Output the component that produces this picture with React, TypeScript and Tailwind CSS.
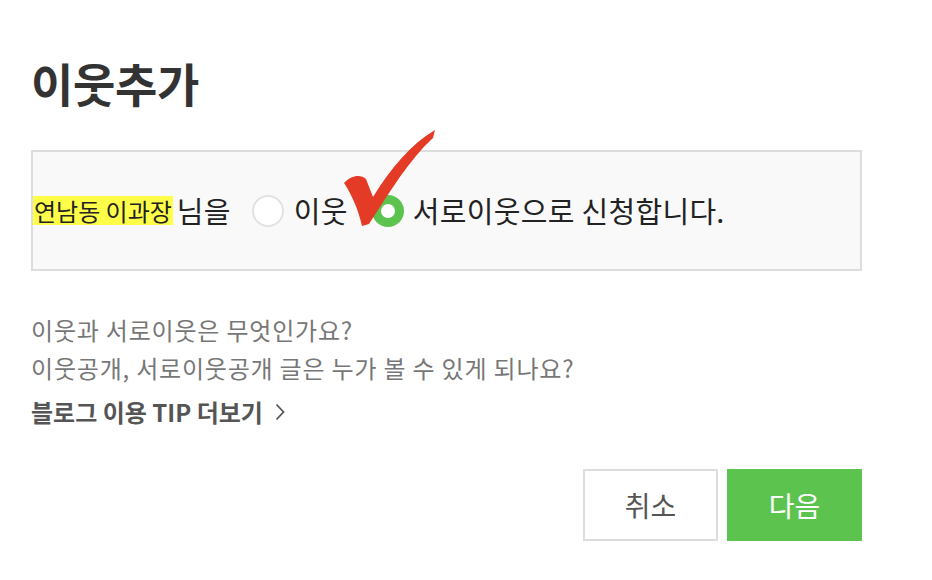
import React from 'react';

const FONT = { fontFamily: '"Noto Sans CJK KR", "Noto Sans", sans-serif' };

function CheckMark() {
  return (
    <svg
      className="absolute left-[335px] top-[122px] pointer-events-none"
      width="110"
      height="112"
      viewBox="335 122 110 112"
    >
      <path
        d="M344,183 C351,175 361,174 366,179 L373,197 C391,168 411,144 435,130 L433,138 C409,160 391,190 369,224 L362,226 C358,209 352,195 344,183 Z"
        fill="#e33b25"
      />
    </svg>
  );
}

export default function App() {
  return (
    <div className="relative w-[932px] h-[580px] bg-white overflow-hidden pl-[31px] pt-[53px]" style={FONT}>
      {/* Title */}
      <h1 className="text-[46px] font-bold leading-[58px] text-[#333] tracking-[-0.3px]">이웃추가</h1>

      {/* Request box */}
      <div className="mt-[39px] w-[831px] h-[121px] border-2 border-[#dddddd] bg-[#f9f9f9] flex items-center">
        <div className="flex items-center text-[29px] tracking-[0.3px] text-[#222] leading-none">
          <span className="bg-[#ffff4a] text-[24px] leading-[29px] tracking-normal px-[1px] text-[#222]">연남동 이과장</span>
          <span className="ml-[4px]">님을</span>
          <span className="ml-[21px] w-[32px] h-[32px] rounded-full bg-white border-2 border-[#e2e2e2]" />
          <span className="ml-[10px]">이웃</span>
          <span className="ml-[24px] w-[32px] h-[32px] rounded-full bg-white border-[9px] border-[#5cc44e]" />
          <span className="ml-[9px]">서로이웃으로 신청합니다.</span>
        </div>
      </div>

      {/* Help links */}
      <div className="mt-[40px] flex flex-col text-[24px] tracking-[0.8px] text-[#777] leading-[38px]">
        <span>이웃과 서로이웃은 무엇인가요?</span>
        <span>이웃공개, 서로이웃공개 글은 누가 볼 수 있게 되나요?</span>
        <span className="mt-[6px] font-bold text-[#555] tracking-normal flex items-center gap-[12px]">
          블로그 이용 TIP 더보기
          <svg width="10" height="18" viewBox="0 0 10 18">
            <path d="M1.5,1.5 L8.5,9 L1.5,16.5" fill="none" stroke="#555" strokeWidth="1.8" />
          </svg>
        </span>
      </div>

      {/* Buttons */}
      <div className="mt-[38px] w-[831px] flex justify-end gap-[9px]">
        <button className="w-[135px] h-[72px] border-2 border-[#dddddd] bg-white text-[28px] text-[#555]">취소</button>
        <button className="w-[135px] h-[72px] bg-[#5cc44e] text-[28px] text-white">다음</button>
      </div>

      <CheckMark />
    </div>
  );
}
